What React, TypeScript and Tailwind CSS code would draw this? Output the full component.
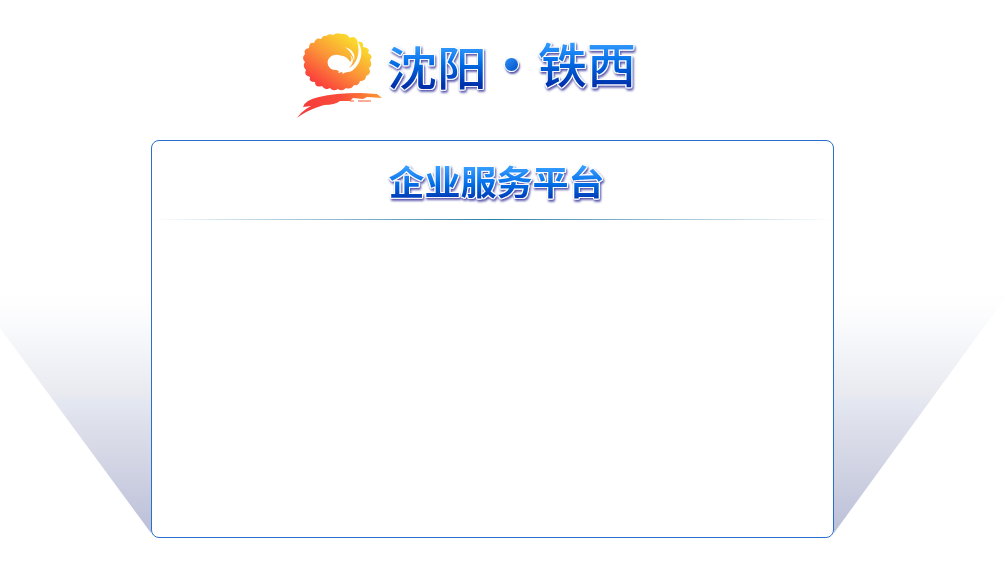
function Emblem() {
  return (
    <svg className="h-[90px] w-[90px] shrink-0" viewBox="295 31 90 90" aria-hidden="true">
      <defs>
        <linearGradient id="sun" x1="356" y1="40" x2="324" y2="88" gradientUnits="userSpaceOnUse">
          <stop offset="0" stopColor="#fadc2c" />
          <stop offset="0.5" stopColor="#fb9638" />
          <stop offset="1" stopColor="#fb403c" />
        </linearGradient>
        <linearGradient id="brush" x1="298" y1="0" x2="382" y2="0" gradientUnits="userSpaceOnUse">
          <stop offset="0" stopColor="#f43b3b" />
          <stop offset="0.5" stopColor="#fa4a3a" />
          <stop offset="1" stopColor="#fb9a30" />
        </linearGradient>
      </defs>
      <path
        fill="url(#sun)"
        d="M326 36Q329 33 333 35Q337 32 341 34Q346 33 350 38Q355 35 358 42Q364 41 363 47Q371 48 368 53Q374 56 370 60Q373 65 369 68Q372 74 366 76Q366 81 360 81Q359 86 354 85Q351 90 346 88Q342 92 338 89Q333 92 330 88Q325 91 322 86Q315 88 315 82Q308 82 310 77Q303 75 306 70Q302 66 305 62Q301 58 305 54Q303 49 309 48Q309 42 314 43Q316 37 321 39Q323 35 326 36Z"
      />
      <path
        fill="white"
        d="M328 65C326 59 332 54 338 55L343 56C347 57 349 60 350 62C352 60 352 58 350 55C355 59 353 64 349 68C346 72 342 72 338 73C340 71 338 70 335 70C331 70 329 67 328 65ZM357 41C365 50 361 64 353 70C350 73 346 71 343 74C341 72 344 71 347 69C357 65 361 53 357 41ZM345 47C352 49 356 54 354 61C353 55 350 51 345 47Z"
      />
      <path
        fill="url(#brush)"
        d="M297 118Q300 113 306 109L311 106L303 107Q305 100 319 97Q335 93 360 93L377 94L382 98L367 97L363 99L353 98L350 101L340 101Q335 105 324 105L318 107Q306 111 297 118Z"
      />
      <path stroke="#fb5a38" strokeWidth="1" d="M350 101h4M358 101h13" />
    </svg>
  );
}

const lettering =
  "block whitespace-nowrap bg-clip-text text-transparent [filter:drop-shadow(1px_0_0_white)_drop-shadow(-1px_0_0_white)_drop-shadow(0_1px_0_white)_drop-shadow(0_-1px_0_white)_drop-shadow(1px_2px_1px_#5552a8)]";

const blues = "bg-gradient-to-b from-[#369fff] via-[#0672ea] via-45% to-[#0030ac]";

const beam =
  "shrink-0 bg-[linear-gradient(to_bottom,#ffffff_0px,#fdfdfe_20px,#f6f7fb_50px,#e9eaef_105px,#e4e8f1_110px,#d9dbe8_150px,#cdd0e1_190px,#bbbfd8_243px)]";

export default function App() {
  return (
    <div className="flex h-[561px] w-[1005px] flex-col overflow-hidden bg-white font-['Noto_Sans_CJK_SC',sans-serif]">
      <header className="flex h-[140px] shrink-0 items-start pt-[31px] pl-[295px]">
        <Emblem />
        <h1 className="flex text-[50px] leading-[74px] font-medium">
          <span className={`${lettering} ${blues} from-20% to-80% mt-[-3px] w-[102px] scale-y-[0.92] pl-[2px]`}>沈阳</span>
          <span className="mx-[17px] mt-[26px] block size-[15px] rounded-full border border-white bg-gradient-to-br from-[#3090f5] to-[#0050c8] shadow-[1px_2px_2px_#5552a8]" />
          <span className={`${lettering} ${blues} from-20% to-80% mt-[-6px] ml-[1px] w-[100px] scale-x-[0.98] scale-y-[0.95]`}>铁西</span>
        </h1>
      </header>
      <main className="flex h-[398px] shrink-0 items-end">
        <div className={`${beam} mb-[5px] h-[243px] w-[151px] [clip-path:polygon(0_0,100%_0,100%_100%,0_38px)]`} />
        <section className="h-[398px] w-[683px] shrink-0 rounded-lg border border-[#2870cc] bg-white">
          <h2 className="flex h-[78px] justify-center pt-[11px] pl-[8px] text-[36px] leading-[54px] font-bold">
            <span className={`${lettering} ${blues} from-20% to-75% scale-y-[0.95]`}>企业服务平台</span>
          </h2>
          <div className="h-px bg-gradient-to-r from-white via-[#2480a8] to-white" />
        </section>
        <div className={`${beam} mb-[5px] h-[243px] w-[171px] [clip-path:polygon(0_0,100%_0,100%_8px,0_100%)]`} />
      </main>
    </div>
  );
}
